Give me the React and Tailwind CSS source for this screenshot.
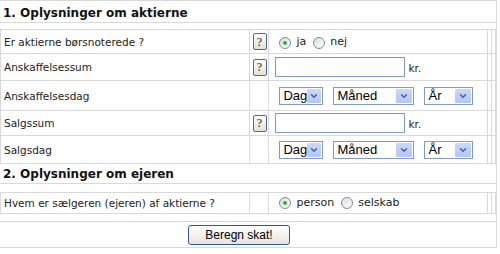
import { ChevronDown } from "lucide-react";

const font = "font-['DejaVu_Sans',Verdana,sans-serif]";

function Help() {
  return (
    <div className="ml-[3px] flex h-[17px] w-[14px] items-center justify-center rounded-[2px] border border-[#4d6b94] bg-gradient-to-b from-white to-[#e3e1d6] font-['Liberation_Serif',serif] text-[12px] leading-none text-[#222]">
      ?
    </div>
  );
}

function Radio({ checked }) {
  return (
    <span className="flex h-[12px] w-[12px] items-center justify-center rounded-full border border-[#6f8cb2] bg-gradient-to-br from-[#dcdcd6] to-white">
      {checked && <span className="h-[4px] w-[4px] rounded-full bg-[#2eb12e]" />}
    </span>
  );
}

function Select({ label, width }) {
  return (
    <div
      className={`flex h-[18px] items-center border border-[#7f9db9] bg-white p-[1px] font-['Liberation_Sans',Arial,sans-serif] text-[13px] text-black ${width}`}
    >
      <span className="flex-1 pl-[2px] leading-none">{label}</span>
      <span className="flex h-full w-[16px] items-center justify-center rounded-[1px] bg-gradient-to-b from-[#cad8fd] to-[#b3c6f7]">
        <ChevronDown size={10} strokeWidth={3.5} className="text-[#4d6185]" />
      </span>
    </div>
  );
}

function DateSelects() {
  return (
    <div className="flex items-center gap-[10px] pl-[10px]">
      <Select label="Dag" width="w-[44px]" />
      <Select label="Måned" width="w-[81px]" />
      <Select label="År" width="w-[49px]" />
    </div>
  );
}

function Amount() {
  return (
    <div className="flex items-center pl-[6px]">
      <div className="h-[20px] w-[130px] border border-[#7f9db9] bg-white" />
      <span className="ml-[3px] mt-[4px]">kr.</span>
    </div>
  );
}

function Row({ h, label, help, children }) {
  return (
    <div className={`flex border-b border-[#d9d9d9] ${h}`}>
      <div className="flex w-[250px] items-center border-l border-r border-[#d9d9d9] pl-[3px] pt-[2px]">
        {label}
      </div>
      <div className="flex w-[20px] items-center border-r border-[#d9d9d9]">
        {help && <Help />}
      </div>
      <div className="flex w-[219px] items-center border-r border-[#d9d9d9]">{children}</div>
      <div className="w-[4px] border-r border-[#d9d9d9]" />
      <div className="w-[4px] border-r border-[#d9d9d9]" />
    </div>
  );
}

export default function App() {
  return (
    <div className={`h-[254px] w-[500px] bg-white ${font} text-[10.5px] text-[#222]`}>
      <div className="w-[497px] border-t border-r border-[#d9d9d9]">
        <div className="flex h-[22px] items-center border-b border-[#d9d9d9] pl-[3px] pt-[2px] text-[12px] font-bold text-[#111]">
          1. Oplysninger om aktierne
        </div>
        <div className="h-[7px] border-b border-[#d9d9d9]" />

        <Row h="h-[24px]" label="Er aktierne børsnoterede ?" help>
          <div className="flex items-center pl-[10px] pt-[2px]">
            <Radio checked />
            <span className="ml-[5px] text-[11px]">ja</span>
            <span className="ml-[7px]"><Radio /></span>
            <span className="ml-[5px] text-[11px]">nej</span>
          </div>
        </Row>
        <Row h="h-[27px]" label="Anskaffelsessum" help>
          <Amount />
        </Row>
        <Row h="h-[30px]" label="Anskaffelsesdag">
          <DateSelects />
        </Row>
        <Row h="h-[25px]" label="Salgssum" help>
          <Amount />
        </Row>
        <Row h="h-[28px]" label="Salgsdag">
          <DateSelects />
        </Row>

        <div className="flex h-[20px] items-center border-b border-[#d9d9d9] pl-[3px] text-[12px] font-bold text-[#111]">
          2. Oplysninger om ejeren
        </div>
        <div className="h-[9px] border-b border-[#d9d9d9]" />

        <Row h="h-[21px]" label="Hvem er sælgeren (ejeren) af aktierne ?">
          <div className="flex items-center pl-[10px]">
            <Radio checked />
            <span className="ml-[5px] text-[11px]">person</span>
            <span className="ml-[7px]"><Radio /></span>
            <span className="ml-[5px] text-[11px]">selskab</span>
          </div>
        </Row>
        <div className="h-[8px] border-b border-[#d9d9d9]" />

        <div className="flex h-[26px] items-center border-b border-[#d9d9d9] pl-[188px]">
          <button className="h-[20px] w-[102px] rounded-[3px] border border-[#315a8a] bg-gradient-to-b from-white to-[#e6e4dc] font-['Liberation_Sans',Arial,sans-serif] text-[12px] text-black">
            Beregn skat!
          </button>
        </div>
      </div>
    </div>
  );
}
